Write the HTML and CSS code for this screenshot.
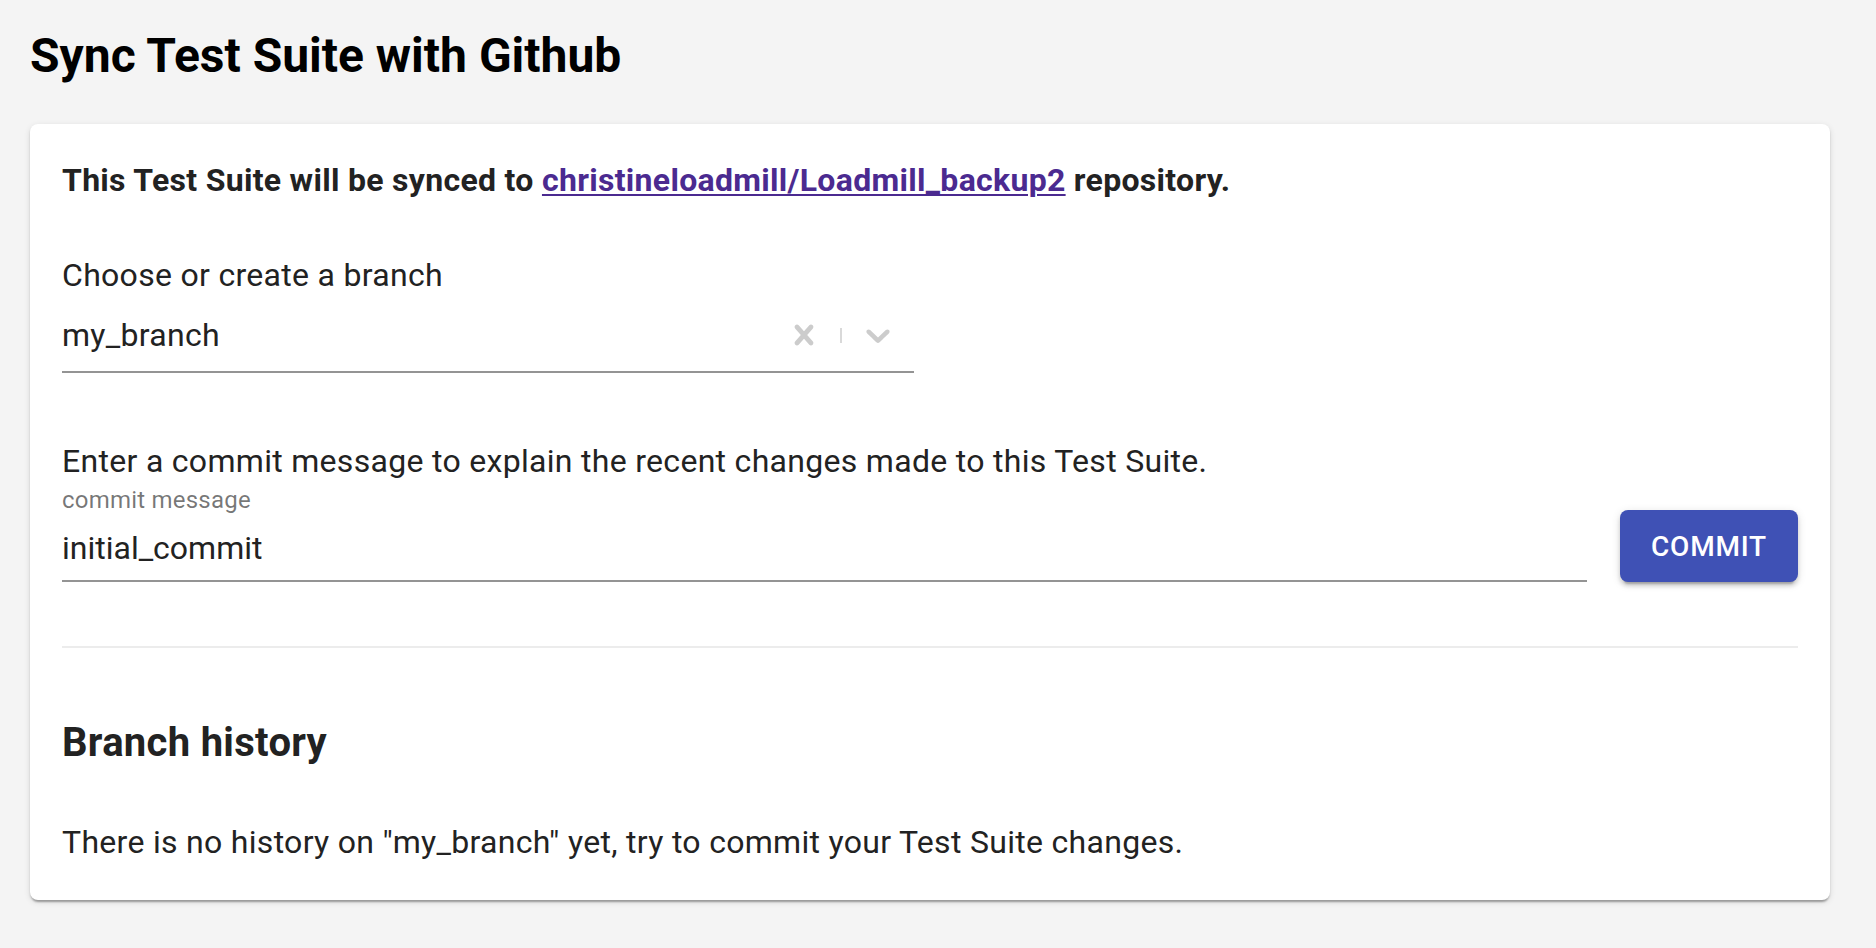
FILE: index.html
```html
<!DOCTYPE html>
<html lang="en">
<head>
<meta charset="utf-8">
<title>Sync Test Suite with Github</title>
<link rel="stylesheet" href="styles.css">
</head>
<body>
<div class="page">
  <h1 class="title">Sync Test Suite with Github</h1>
  <div class="card">
    <p class="repo">This Test Suite will be synced to <a class="repo-link" href="#">christineloadmill/Loadmill_backup2</a> repository.</p>
    <div class="field-label">Choose or create a branch</div>
    <div class="select">
      <div class="select-value">my_branch</div>
      <div class="indicators">
        <span class="ind">
          <svg class="ind-icon" viewBox="0 0 20 20" aria-hidden="true"><path d="M14.348 14.849c-0.469 0.469-1.229 0.469-1.697 0l-2.651-3.030-2.651 3.029c-0.469 0.469-1.229 0.469-1.697 0-0.469-0.469-0.469-1.229 0-1.697l2.758-3.15-2.759-3.152c-0.469-0.469-0.469-1.228 0-1.697s1.228-0.469 1.697 0l2.652 3.031 2.651-3.031c0.469-0.469 1.228-0.469 1.697 0s0.469 1.229 0 1.697l-2.758 3.152 2.758 3.150c0.469 0.469 0.469 1.229 0 1.698z"/></svg>
        </span>
        <span class="sep"></span>
        <span class="ind">
          <svg class="ind-icon" viewBox="0 0 20 20" aria-hidden="true"><path d="M4.516 7.548c0.436-0.446 1.043-0.481 1.576 0l3.908 3.747 3.908-3.747c0.533-0.481 1.141-0.446 1.574 0 0.436 0.445 0.408 1.197 0 1.615-0.406 0.418-4.695 4.502-4.695 4.502-0.217 0.223-0.502 0.335-0.787 0.335s-0.57-0.112-0.789-0.335c0 0-4.287-4.084-4.695-4.502s-0.436-1.17 0-1.615z"/></svg>
        </span>
      </div>
    </div>
    <div class="commit-section">
      <div class="field-label">Enter a commit message to explain the recent changes made to this Test Suite.</div>
      <div class="commit-row">
        <div class="text-field">
          <label class="tf-label">commit message</label>
          <div class="tf-input">initial_commit</div>
        </div>
        <button class="btn" type="button">Commit</button>
      </div>
    </div>
    <hr class="divider">
    <h2 class="history-title">Branch history</h2>
    <p class="history-empty">There is no history on "my_branch" yet, try to commit your Test Suite changes.</p>
  </div>
</div>
</body>
</html>
```
FILE: styles.css
```css
html, body {
  margin: 0;
  padding: 0;
  background: #f4f4f4;
}
body {
  font-family: Roboto, "Liberation Sans", Arial, sans-serif;
  color: rgba(0, 0, 0, 0.87);
}
.page {
  padding: 28px 46px 48px 30px;
}
.title {
  margin: 0 0 40px 0;
  font-size: 48px;
  line-height: 56px;
  font-weight: 700;
  color: #000;
}
.card {
  background: #fff;
  border-radius: 8px;
  padding: 32px 32px 34px 32px;
  box-shadow: 0 4px 2px -2px rgba(0,0,0,0.2), 0 2px 2px 0 rgba(0,0,0,0.14), 0 2px 6px 0 rgba(0,0,0,0.12);
}
.repo {
  margin: 0 0 47px 0;
  font-size: 32px;
  line-height: 48px;
  font-weight: 700;
  letter-spacing: 0.3px;
  color: #222;
}
.repo-link {
  color: #4b2a90;
  text-decoration: underline;
  text-decoration-thickness: 2px;
  text-underline-offset: 3px;
}
.field-label {
  font-size: 32px;
  line-height: 48px;
  letter-spacing: 0.3px;
  color: #222;
}
.select {
  width: 852px;
  height: 72px;
  display: flex;
  align-items: center;
  border-bottom: 2px solid #949494;
}
.select-value {
  flex: 1;
  font-size: 32px;
  line-height: 48px;
  letter-spacing: 0.3px;
  color: #222;
}
.indicators {
  display: flex;
  align-items: center;
}
.ind {
  display: flex;
  align-items: center;
  padding: 0 16px;
}
.ind-icon {
  width: 40px;
  height: 40px;
  fill: #cccccc;
  display: block;
}
.sep {
  width: 2px;
  height: 15px;
  background: #d9d9d9;
}
.commit-section {
  margin-top: 64px;
}
.commit-row {
  display: flex;
  align-items: flex-end;
  gap: 33px;
}
.text-field {
  flex: 1;
  display: flex;
  flex-direction: column;
}
.tf-label {
  margin-top: 1px;
  font-size: 24px;
  line-height: 28px;
  letter-spacing: 0.22px;
  color: rgba(0, 0, 0, 0.54);
}
.tf-input {
  margin-top: 10px;
  font-size: 32px;
  line-height: 48px;
  padding-bottom: 8px;
  border-bottom: 2px solid #949494;
  color: #222;
}
.btn {
  width: 178px;
  height: 72px;
  border: none;
  border-radius: 8px;
  background: #3f51b5;
  color: #fff;
  font-family: Roboto, "Liberation Sans", Arial, sans-serif;
  font-size: 28px;
  font-weight: 500;
  letter-spacing: 0.8px;
  text-transform: uppercase;
  box-shadow: 0 6px 2px -4px rgba(0,0,0,0.2), 0 4px 4px 0 rgba(0,0,0,0.14), 0 2px 10px 0 rgba(0,0,0,0.12);
}
.divider {
  margin: 64px 0 0 0;
  border: none;
  height: 2px;
  background: #ececec;
}
.history-title {
  margin: 71px 0 0 0;
  font-size: 40px;
  line-height: 48px;
  font-weight: 700;
  letter-spacing: 0.3px;
  color: #222;
}
.history-empty {
  margin: 51px 0 0 0;
  font-size: 32px;
  line-height: 48px;
  letter-spacing: 0.3px;
  color: #222;
}
```
